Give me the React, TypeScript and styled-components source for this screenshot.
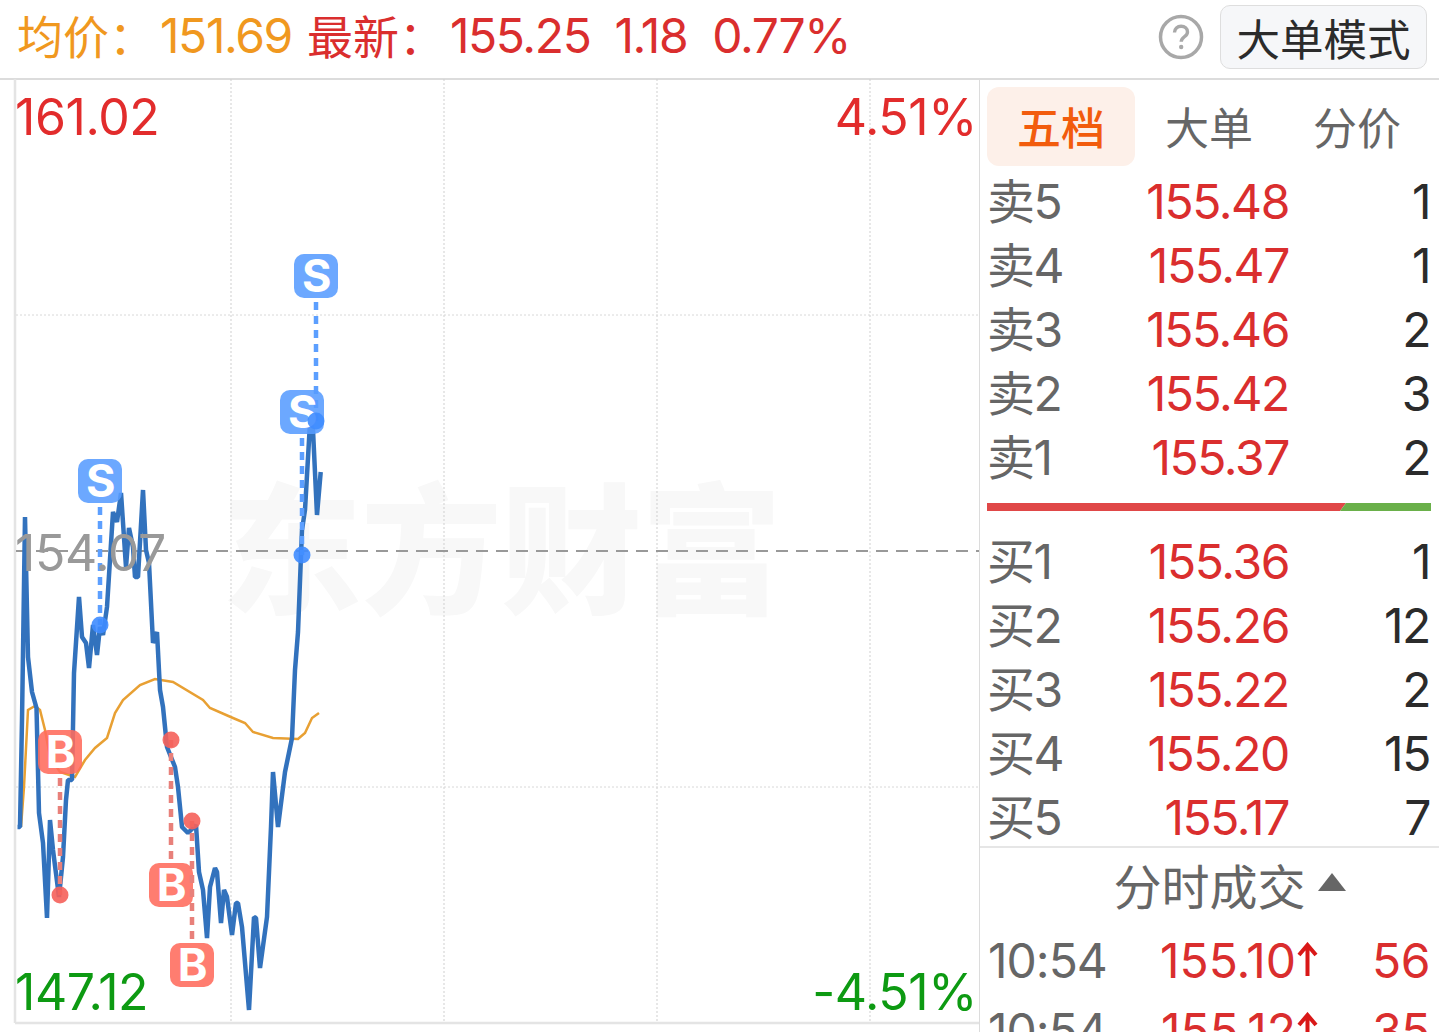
import React from 'react';
import styled, { createGlobalStyle } from 'styled-components';

const RED = '#da2e2e';
const ORANGE = '#f0981f';
const GREEN = '#0d9a12';

const blueLine =
  '17.5,827 20,827 22,720 25,517 28,657 32,692 36.5,708 39,813 43,843 47,918 50,820 53,850 59,897 63,857 66,800 68,780 72,780 74,673 79,597 82,637 86,643 89,668 93,625 97,655 100,627 103,635 107,607 113,512 117,522 121,493 126,567 129,528 133,547 135,577 138,577 143,490 146,550 149,563 153,643 157,632 160,690 163,707 167,747 175,767 178,787 182,827 188,833 196,825 199,872 203,890 207,938 210,887 215,868 217,872 221,923 224,890 227,897 232,935 236,903 238,903 242,927 249,1010 254,917 256,918 260,968 267,917 271,827 273,772 278,827 285,772 292,738 295,670 298,632 302,530 305,510 310,423 313,430 317,515 320.7,472';

const avgLine =
  '21,827 24,787 28,710 35,706 40,710 45,730 50,757 60,772 75,777 85,760 95,748 107,738 115,713 123,700 140,685 155,679 173,682 203,700 210,708 233,718 245,723 253,732 273,738 298,739 305,733 312,718 319,713';

const gridX = [231, 444, 657, 870];
const gridY = [315, 787];

const sells = [
  { name: '卖5', price: '155.48', qty: '1' },
  { name: '卖4', price: '155.47', qty: '1' },
  { name: '卖3', price: '155.46', qty: '2' },
  { name: '卖2', price: '155.42', qty: '3' },
  { name: '卖1', price: '155.37', qty: '2' },
];

const buys = [
  { name: '买1', price: '155.36', qty: '1' },
  { name: '买2', price: '155.26', qty: '12' },
  { name: '买3', price: '155.22', qty: '2' },
  { name: '买4', price: '155.20', qty: '15' },
  { name: '买5', price: '155.17', qty: '7' },
];

const ticks = [
  { time: '10:54', price: '155.10', qty: '56' },
  { time: '10:54', price: '155.12', qty: '35' },
];

const sellMarks = [
  { x: 316, y: 276, dotX: 316, dotY: 421 },
  { x: 302, y: 412, dotX: 302, dotY: 555 },
  { x: 100, y: 481, dotX: 100, dotY: 625 },
];

const buyMarks = [
  { x: 60, y: 752, dotX: 60, dotY: 895 },
  { x: 171, y: 885, dotX: 171, dotY: 740 },
  { x: 192, y: 965, dotX: 192, dotY: 821 },
];

type MarkData = { x: number; y: number; dotX: number; dotY: number };

const Mark = ({ m, letter, fill, dash }: { m: MarkData; letter: string; fill: string; dash: string }) => {
  const down = m.dotY > m.y;
  return (
    <g>
      <line
        x1={m.x}
        x2={m.dotX}
        y1={down ? m.y + 26 : m.y - 26}
        y2={m.dotY}
        stroke={dash}
        strokeWidth={4.5}
        strokeDasharray="8 6"
      />
      <rect x={m.x - 22} y={m.y - 22} width={44} height={44} rx={10} fill={fill} fillOpacity={0.88} />
      <text
        x={m.x}
        y={m.y + 16}
        textAnchor="middle"
        fontFamily="Inter, sans-serif"
        fontWeight={700}
        fontSize={45}
        fill="#fff"
      >
        {letter}
      </text>
    </g>
  );
};

const App = () => {
  return (
    <>
      <GlobalStyle />
      <Page>
        <Header>
          <Quote $color={ORANGE}>
            <Cn>均价：</Cn>
            <Num $ml={0}>151.69</Num>
          </Quote>
          <Quote $color={RED}>
            <Cn>最新：</Cn>
            <Num $ml={0}>155.25</Num>
            <Num $ml={24}>1.18</Num>
            <Num $ml={25}>0.77%</Num>
          </Quote>
          <HeaderRight>
            <HelpIcon width="46" height="46" viewBox="0 0 46 46">
              <circle cx="23" cy="23" r="20.5" fill="none" stroke="#a8a8a8" strokeWidth="3.5" />
              <path d="M16.5 18.5c0-3.8 2.9-6.2 6.6-6.2 3.6 0 6.4 2.2 6.4 5.6 0 4.8-6.3 5-6.3 9.9" fill="none" stroke="#a8a8a8" strokeWidth="3.4" />
              <circle cx="23.2" cy="33" r="2.2" fill="#a8a8a8" />
            </HelpIcon>
            <ModeButton>大单模式</ModeButton>
          </HeaderRight>
        </Header>
        <Body>
          <ChartPane>
            <Watermark>东方财富</Watermark>
            <ChartSvg viewBox="0 79 979 953" width="979" height="953">
              <line x1="15" x2="15" y1="79" y2="1023" stroke="#e4e4e4" strokeWidth="2.5" />
              <line x1="15" x2="979" y1="1023" y2="1023" stroke="#e4e4e4" strokeWidth="2.5" />
              {gridX.map((x) => (
                <line key={x} x1={x} x2={x} y1="79" y2="1022" stroke="#cfcfcf" strokeWidth="1" strokeDasharray="2 2" />
              ))}
              {gridY.map((y) => (
                <line key={y} x1="16" x2="979" y1={y} y2={y} stroke="#d8d8d8" strokeWidth="1" strokeDasharray="2 2" />
              ))}
              <line x1="16" x2="979" y1="551" y2="551" stroke="#999" strokeWidth="2" strokeDasharray="12 8" />
              <polyline points={avgLine} fill="none" stroke="#e8a033" strokeWidth="2.5" />
              <polyline points={blueLine} fill="none" stroke="#3272bd" strokeWidth="4.5" strokeLinejoin="bevel" />
              {sellMarks.map((m) => (
                <Mark key={m.y} m={m} letter="S" fill="#589cff" dash="#5c9fff" />
              ))}
              {buyMarks.map((m) => (
                <Mark key={m.y} m={m} letter="B" fill="#ff6b5c" dash="#e8807a" />
              ))}
              {sellMarks.map((m) => (
                <circle key={m.y} cx={m.dotX} cy={m.dotY} r={8.5} fill="#3f8cff" fillOpacity={0.9} />
              ))}
              {buyMarks.map((m) => (
                <circle key={m.y} cx={m.dotX} cy={m.dotY} r={8.5} fill="#f5605a" fillOpacity={0.9} />
              ))}
            </ChartSvg>
            <AxisLabel $color="#e22c2c" $top={9}>161.02</AxisLabel>
            <AxisLabel $color="#999" $top={445}>154.07</AxisLabel>
            <AxisLabel $color={GREEN} $top={884}>147.12</AxisLabel>
            <AxisLabel $color="#e22c2c" $top={9} $right>4.51%</AxisLabel>
            <AxisLabel $color={GREEN} $top={884} $right>-4.51%</AxisLabel>
          </ChartPane>
          <Side>
            <Tabs>
              <Tab $active>五档</Tab>
              <Tab>大单</Tab>
              <Tab>分价</Tab>
            </Tabs>
            <Book>
              {sells.map((r) => (
                <Row key={r.name}>
                  <RowName>{r.name}</RowName>
                  <RowPrice>{r.price}</RowPrice>
                  <RowQty>{r.qty}</RowQty>
                </Row>
              ))}
            </Book>
            <Ratio>
              <RatioRed />
              <RatioGreen />
            </Ratio>
            <Book>
              {buys.map((r) => (
                <Row key={r.name}>
                  <RowName>{r.name}</RowName>
                  <RowPrice>{r.price}</RowPrice>
                  <RowQty>{r.qty}</RowQty>
                </Row>
              ))}
            </Book>
            <TickHead>
              分时成交
              <Caret />
            </TickHead>
            {ticks.map((t) => (
              <TickRow key={t.price}>
                <TickTime>{t.time}</TickTime>
                <TickPrice>
                  {t.price}
                  <svg width="23" height="36" viewBox="0 0 23 36">
                    <path d="M11.5 34V4M3 13l8.5-10L20 13" fill="none" stroke="#d91818" strokeWidth="4" />
                  </svg>
                </TickPrice>
                <TickQty>{t.qty}</TickQty>
              </TickRow>
            ))}
          </Side>
        </Body>
      </Page>
    </>
  );
};

const GlobalStyle = createGlobalStyle`
  html, body {
    margin: 0;
    background: #fff;
    overflow: hidden;
  }
  * {
    box-sizing: border-box;
  }
`;

const Page = styled.div`
  width: 1439px;
  height: 1032px;
  overflow: hidden;
  font-family: Inter, 'Noto Sans CJK SC', sans-serif;
  font-size: 48px;
  letter-spacing: -1.4px;
  background: #fff;
`;

const Header = styled.header`
  align-items: center;
  border-bottom: 2px solid #dcdcdc;
  display: flex;
  height: 80px;
  padding: 0 12px 4px 17px;
`;

const Quote = styled.div<{ $color: string }>`
  align-items: center;
  color: ${(p) => p.$color};
  display: flex;
  margin-right: 15px;
  padding-bottom: 6px;
  white-space: nowrap;
`;

const Cn = styled.span`
  font-family: 'Noto Sans CJK SC', sans-serif;
  font-size: 46px;
  letter-spacing: 0;
  width: 143px;
`;

const Num = styled.span<{ $ml: number }>`
  margin-left: ${(p) => p.$ml}px;
  padding-top: 2px;
`;

const HeaderRight = styled.div`
  align-items: center;
  display: flex;
  gap: 16px;
  margin-left: auto;
`;

const HelpIcon = styled.svg`
  display: block;
`;

const ModeButton = styled.div`
  align-items: center;
  background: #f6f7f9;
  border: 1px solid #dedede;
  border-radius: 10px;
  color: #2b2b2b;
  display: flex;
  font-family: 'Noto Sans CJK SC', sans-serif;
  font-size: 43.5px;
  height: 64px;
  justify-content: center;
  letter-spacing: 0;
  width: 207px;
`;

const Body = styled.div`
  display: flex;
  height: 952px;
`;

const ChartPane = styled.div`
  flex: 0 0 979px;
  position: relative;
`;

const ChartSvg = styled.svg`
  display: block;
  left: 0;
  position: absolute;
  top: -1px;
`;

const Watermark = styled.div`
  color: #f8f8f8;
  font-family: 'Noto Sans CJK SC', sans-serif;
  font-size: 141px;
  font-weight: 900;
  left: 221px;
  letter-spacing: -1px;
  line-height: 1;
  position: absolute;
  top: 391px;
  white-space: nowrap;
`;

const AxisLabel = styled.span<{ $color: string; $top: number; $right?: boolean }>`
  color: ${(p) => p.$color};
  font-size: 50px;
  letter-spacing: -0.4px;
  line-height: 56px;
  position: absolute;
  top: ${(p) => p.$top}px;
  ${(p) => (p.$right ? 'right: 2px;' : 'left: 15px;')}
`;

const Side = styled.div`
  border-left: 1px solid #dcdcdc;
  flex: 1;
  min-width: 0;
`;

const Tabs = styled.div`
  display: flex;
  padding: 7px 8px 0 7px;
`;

const Tab = styled.div<{ $active?: boolean }>`
  align-items: center;
  background: ${(p) => (p.$active ? '#fdf0e9' : 'transparent')};
  border-radius: 12px;
  color: ${(p) => (p.$active ? '#f25c0d' : '#666')};
  display: flex;
  flex: 1;
  font-family: 'Noto Sans CJK SC', sans-serif;
  font-size: 44px;
  font-weight: ${(p) => (p.$active ? 500 : 400)};
  height: 79px;
  justify-content: center;
  letter-spacing: 0;
  padding-bottom: 2px;
`;

const Book = styled.div`
  display: flex;
  flex-direction: column;
`;

const Row = styled.div`
  align-items: baseline;
  display: grid;
  grid-template-columns: 152px 150px 1fr;
  height: 64px;
  line-height: 72px;
  padding: 0 9px 0 7px;
`;

const RowName = styled.span`
  color: #666;
  white-space: nowrap;
`;

const RowPrice = styled.span`
  color: ${RED};
  justify-self: end;
`;

const RowQty = styled.span`
  color: #2b2b2b;
  justify-self: end;
`;

const Ratio = styled.div`
  display: flex;
  height: 8px;
  margin: 17px 8px 15px 7px;
`;

const RatioRed = styled.div`
  background: #e04848;
  clip-path: polygon(0 0, 100% 0, calc(100% - 6px) 100%, 0 100%);
  flex: 0 0 359px;
`;

const RatioGreen = styled.div`
  background: #6ab04a;
  clip-path: polygon(6px 0, 100% 0, 100% 100%, 0 100%);
  flex: 1;
  margin-left: -6px;
`;

const TickHead = styled.div`
  align-items: center;
  border-top: 2px solid #e6e6e6;
  color: #666;
  display: flex;
  font-family: 'Noto Sans CJK SC', sans-serif;
  font-size: 48px;
  gap: 12px;
  height: 79px;
  justify-content: center;
  letter-spacing: 0;
  padding-bottom: 6px;
`;

const Caret = styled.span`
  border-bottom: 18px solid #666;
  border-left: 14px solid transparent;
  border-right: 14px solid transparent;
  height: 0;
  margin-right: -40px;
  margin-top: -4px;
  width: 0;
`;

const TickRow = styled.div`
  align-items: center;
  display: grid;
  grid-template-columns: 150px 181px 1fr;
  height: 70px;
  letter-spacing: 0;
  padding: 0 9px 0 8px;
`;

const TickTime = styled(RowName)`
  letter-spacing: -1px;
`;

const TickPrice = styled.span`
  align-items: center;
  color: ${RED};
  display: flex;
  justify-self: end;
`;

const TickQty = styled.span`
  color: ${RED};
  justify-self: end;
  letter-spacing: -0.5px;
`;

export default App;
